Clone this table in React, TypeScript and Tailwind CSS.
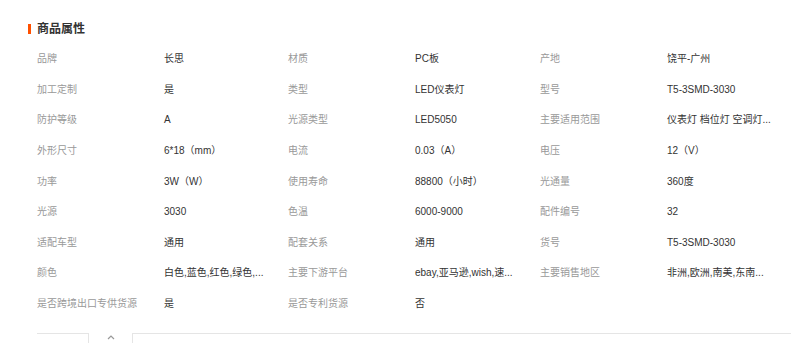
import React from "react";

const rows: [string, string][][] = [
  [["品牌", "长思"], ["材质", "PC板"], ["产地", "饶平-广州"]],
  [["加工定制", "是"], ["类型", "LED仪表灯"], ["型号", "T5-3SMD-3030"]],
  [["防护等级", "A"], ["光源类型", "LED5050"], ["主要适用范围", "仪表灯 档位灯 空调灯..."]],
  [["外形尺寸", "6*18（mm）"], ["电流", "0.03（A）"], ["电压", "12（V）"]],
  [["功率", "3W（W）"], ["使用寿命", "88800（小时）"], ["光通量", "360度"]],
  [["光源", "3030"], ["色温", "6000-9000"], ["配件编号", "32"]],
  [["适配车型", "通用"], ["配套关系", "通用"], ["货号", "T5-3SMD-3030"]],
  [["颜色", "白色,蓝色,红色,绿色,..."], ["主要下游平台", "ebay,亚马逊,wish,速..."], ["主要销售地区", "非洲,欧洲,南美,东南..."]],
  [["是否跨境出口专供货源", "是"], ["是否专利货源", "否"]],
];

export default function App() {
  return (
    <div
      className="w-[794px] h-[343px] bg-white overflow-hidden flex flex-col"
      style={{ fontFamily: '"Liberation Sans", "Noto Sans CJK SC", sans-serif' }}
    >
      <div className="mt-[22px] h-[14px] flex items-center pl-[28px]">
        <div className="w-[3px] h-[10px] bg-[#ff5000]" />
        <div className="ml-[6px] text-[12px] font-bold text-[#333] leading-none">商品属性</div>
      </div>
      <div className="mt-[8px] pl-[37px] flex flex-col">
        {rows.map((row, i) => (
          <div key={i} className="h-[30.6px] flex items-center">
            {row.map(([k, v], j) => (
              <div key={j} className={`flex items-center ${j === 0 ? "w-[251px]" : j === 1 ? "w-[252px]" : "w-[250px]"}`}>
                <div className="w-[127px] text-[10px] text-[#999] whitespace-nowrap leading-none">{k}</div>
                <div className="text-[10px] text-[#333] whitespace-nowrap leading-none">{v}</div>
              </div>
            ))}
          </div>
        ))}
      </div>
      <div className="mt-[13.6px] flex flex-1 pl-[37px] pr-[3px]">
        <div className="w-[52px] border-t border-r border-[#e5e5e5]" />
        <div className="w-[43px] flex justify-center pt-[1px]">
          <svg width="8" height="6" viewBox="0 0 8 6">
            <path d="M1 5 L4 2 L7 5" fill="none" stroke="#999" strokeWidth="1.2" />
          </svg>
        </div>
        <div className="flex-1 border-t border-l border-[#e5e5e5]" />
      </div>
    </div>
  );
}
